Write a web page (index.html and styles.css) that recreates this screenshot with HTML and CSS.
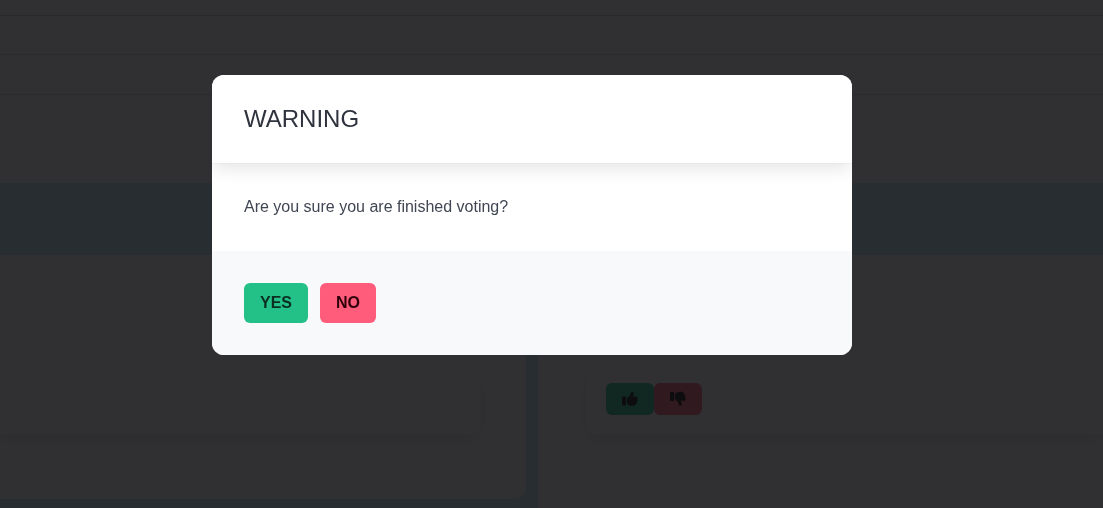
FILE: index.html
```html
<!DOCTYPE html>
<html lang="en">
<head>
<meta charset="utf-8">
<meta name="viewport" content="width=device-width, initial-scale=1">
<title>Voting</title>
<link rel="stylesheet" href="styles.css">
</head>
<body>
<main class="page" inert>
  <div class="rows">
    <div class="row row-first"></div>
    <div class="row row-second"></div>
    <div class="row"></div>
  </div>
  <div class="board">
    <section class="column column-left">
      <div class="card"></div>
    </section>
    <section class="column column-right">
      <div class="card">
        <button class="vote vote-up" type="button" aria-label="Vote up">
          <svg viewBox="0 0 16 16" aria-hidden="true"><path d="M.8 5.500h2.600q.8 0 .8.800v7.400q0 .8-.8.800H.8Q0 14.500 0 13.700V6.300Q0 5.500.8 5.500zM9 1.800c.2-.7.900-1.200 1.700-1 .8.200 1.200.9 1 1.700l-.5 2.200-.4 1H14.200c.8 0 1.500.7 1.500 1.500 0 .6-.3 1.100-.8 1.300.4.300.6.700.6 1.200 0 .7-.5 1.300-1.100 1.500.1.200.2.500.2.700 0 .7-.5 1.300-1.200 1.400.1.800-.6 1.500-1.500 1.500H8.800c-.7 0-1.300-.2-1.800-.6l-1-.8C5.300 12.900 5 12 5 11.200V8.600c0-.9.400-1.800 1.100-2.400l.3-.2C7.300 5.300 8 4.500 8.300 3.400z"/></svg>
        </button>
        <button class="vote vote-down" type="button" aria-label="Vote down">
          <svg viewBox="0 0 16 16" aria-hidden="true"><g transform="matrix(1 0 0 -1 0 15.500)"><path d="M.8 5.500h2.600q.8 0 .8.800v7.400q0 .8-.8.800H.8Q0 14.500 0 13.700V6.300Q0 5.500.8 5.500zM9 1.800c.2-.7.900-1.200 1.700-1 .8.200 1.200.9 1 1.700l-.5 2.200-.4 1H14.200c.8 0 1.500.7 1.500 1.500 0 .6-.3 1.100-.8 1.300.4.300.6.700.6 1.200 0 .7-.5 1.300-1.100 1.500.1.200.2.500.2.700 0 .7-.5 1.300-1.200 1.400.1.800-.6 1.500-1.500 1.500H8.800c-.7 0-1.300-.2-1.800-.6l-1-.8C5.300 12.900 5 12 5 11.200V8.600c0-.9.400-1.800 1.100-2.400l.3-.2C7.300 5.300 8 4.500 8.300 3.400z"/></g></svg>
        </button>
      </div>
    </section>
  </div>
</main>
<div class="modal">
  <div class="dialog" role="dialog" aria-modal="true" aria-labelledby="dialog-title">
    <header class="dialog-head"><h1 class="dialog-title" id="dialog-title">WARNING</h1></header>
    <section class="dialog-body"><p class="dialog-text">Are you sure you are finished voting?</p></section>
    <footer class="dialog-foot">
      <button class="button button-yes" type="button">YES</button>
      <button class="button button-no" type="button">NO</button>
    </footer>
  </div>
</div>
</body>
</html>
```
FILE: styles.css
```css
* {
  box-sizing: border-box;
}

body {
  margin: 0;
  height: 100vh;
  overflow: hidden;
  background: #fff;
  color: #404654;
  font: 16px/24px "Liberation Sans", Arial, sans-serif;
}

h1, p {
  margin: 0;
}

.page {
  height: 100vh;
  display: flex;
  flex-direction: column;
}

.rows {
  padding-bottom: 88px;
}

.row {
  height: 40px;
  border-bottom: 1px solid #d4d4d4;
}

.row-first {
  height: 16px;
}

.row-second {
  height: 39px;
}

.board {
  flex: 1;
  display: grid;
  grid-template-columns: 526fr 565fr;
  gap: 12px;
  padding-top: 72px;
  background: #c1e5f2;
}

.column {
  padding-top: 108px;
  background: #fff;
}

.column-left {
  margin-bottom: 9px;
  padding-right: 45px;
  border-bottom-right-radius: 12px;
}

.column-right {
  padding-left: 48px;
}

.card {
  display: flex;
  height: 72px;
  padding: 20px;
  background: #fff;
  box-shadow: 0 8px 16px -2px rgba(10, 10, 10, 0.1), 0 0 0 1px rgba(10, 10, 10, 0.02);
}

.column-left .card {
  border-radius: 0 12px 12px 0;
}

.column-right .card {
  border-radius: 12px 0 0 12px;
}

.vote {
  display: grid;
  place-items: center;
  width: 48px;
  height: 32px;
  padding: 0;
  border: 0;
  border-radius: 6px;
}

.vote svg {
  width: 16px;
  height: 16px;
  fill: #0a0a0a;
}

.vote-up {
  background: #23c088;
}

.vote-down {
  background: #ff5c7c;
}

.modal {
  position: fixed;
  inset: 0;
  display: flex;
  align-items: flex-start;
  justify-content: center;
  padding: 75px 39px 0 0;
  background: rgba(14, 14, 16, 0.86);
}

.dialog {
  width: 100%;
  max-width: 640px;
  border-radius: 12px;
  overflow: hidden;
  background: #fff;
}

.dialog-head {
  position: relative;
  padding: 32px;
  background: #fff;
  box-shadow: 0 8px 16px -2px rgba(10, 10, 10, 0.1), 0 0 0 1px rgba(10, 10, 10, 0.02);
}

.dialog-title {
  color: #2e333d;
  font-size: 24px;
  font-weight: 400;
  line-height: 24px;
}

.dialog-body {
  padding: 32px;
}

.dialog-foot {
  display: flex;
  gap: 12px;
  padding: 32px;
  background: #f8f9fb;
}

.button {
  height: 40px;
  padding: 0 16px;
  border: 0;
  border-radius: 6px;
  font: bold 16px/24px "Liberation Sans", Arial, sans-serif;
}

.button-yes {
  background: #23c088;
  color: #0a2f21;
}

.button-no {
  background: #ff5c7c;
  color: #2f0009;
}
```
